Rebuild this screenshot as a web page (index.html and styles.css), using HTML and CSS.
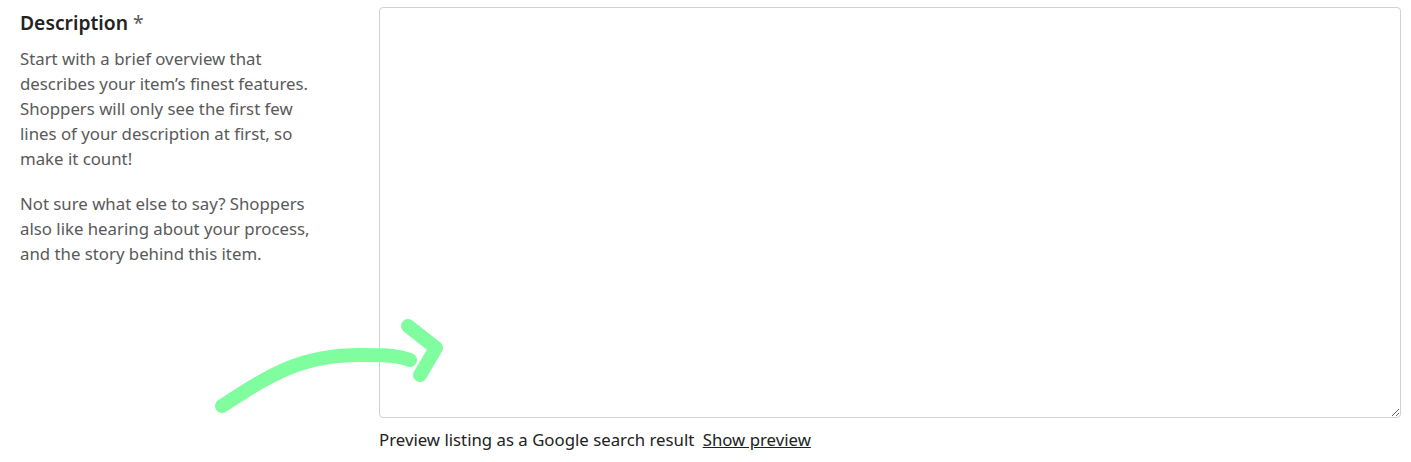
FILE: index.html
```html
<!DOCTYPE html>
<html>
<head>
<meta charset="utf-8">
<link rel="stylesheet" href="styles.css">
</head>
<body>
<div class="field">
  <div class="info">
    <h2 class="label">Description <span class="req">*</span></h2>
    <p class="help">Start with a brief overview that describes your item’s finest features. Shoppers will only see the first few lines of your description at first, so make it count!</p>
    <p class="help">Not sure what else to say? Shoppers also like hearing about your process, and the story behind this item.</p>
  </div>
  <div class="control">
    <textarea class="input"></textarea>
    <div class="preview">Preview listing as a Google search result <a class="link" href="#">Show preview</a></div>
  </div>
</div>
<svg class="arrow" width="260" height="120" viewBox="200 300 260 120">
  <path d="M222 406 C 270 375, 300 355, 360 355 C 390 355, 400 356, 410 360" fill="none" stroke="#80fd9f" stroke-width="14" stroke-linecap="round"/>
  <path d="M408 326 L 436 348 L 420 375" fill="none" stroke="#80fd9f" stroke-width="14" stroke-linecap="round" stroke-linejoin="round"/>
</svg>
</body>
</html>
```
FILE: styles.css
```css
html, body { margin: 0; padding: 0; background: #fff; }
body { font-family: "Noto Sans", "Open Sans", sans-serif; position: relative; width: 1411px; height: 462px; overflow: hidden; }
.field { display: flex; padding: 7px 10px 0 20px; }
.info { width: 305px; margin-right: 54px; }
.label { margin: 3px 0 0; font-size: 19.3px; font-weight: 600; color: #222; line-height: 26px; }
.req { font-weight: 400; color: #595959; }
.help { margin: 10px 0 0; font-size: 16.8px; line-height: 25px; color: #595959; }
.help + .help { margin-top: 20px; }
.control { flex: 1; display: flex; flex-direction: column; }
.input { display: block; box-sizing: border-box; width: 100%; height: 411px; margin: 0; border: 1px solid #d1d1d1; border-radius: 4px; resize: vertical; font: inherit; }
.preview { margin-top: 10px; font-size: 16.8px; line-height: 24px; color: #222; }
.link { color: #222; text-decoration: underline; margin-left: 4px; }
.arrow { position: absolute; left: 200px; top: 300px; }
```
